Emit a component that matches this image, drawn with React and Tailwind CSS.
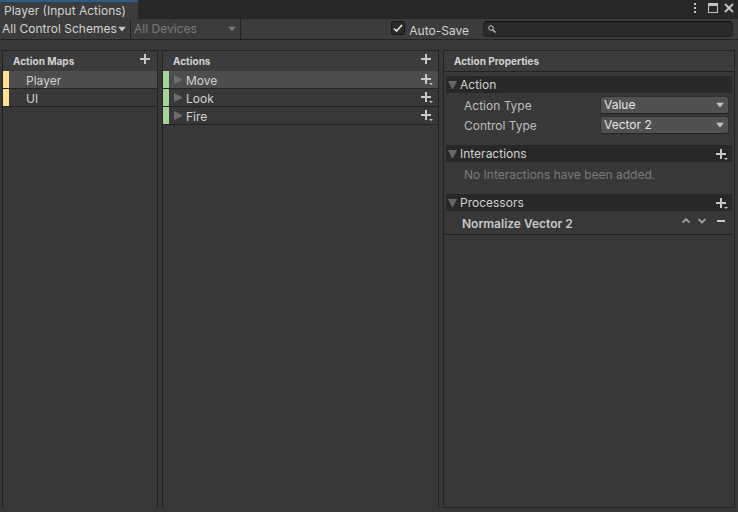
import React from "react";

const actionMaps = ["Player", "UI"];
const actions = ["Move", "Look", "Fire"];

function PlusIcon() {
  return (
    <svg width="14" height="14" viewBox="0 0 14 14" className="block" aria-hidden="true">
      <path d="M6 2h2v4h4v2H8v4H6V8H2V6h4z" fill="#c8c8c8" />
    </svg>
  );
}

function PlusMenuIcon() {
  return (
    <svg width="14" height="14" viewBox="0 0 14 14" className="block" aria-hidden="true">
      <path d="M5 1h2v4h4v2H7v4H5V7H1V5h4z" fill="#c8c8c8" />
      <path d="M9 10h4l-2 2z" fill="#c8c8c8" />
    </svg>
  );
}

function Caret({ className }) {
  return (
    <svg
      width="8"
      height="5"
      viewBox="0 0 8 5"
      aria-hidden="true"
      className={`pointer-events-none absolute top-1/2 -translate-y-1/2 ${className}`}
    >
      <path d="M0 0h8L4.500 4.500h-1z" fill="currentColor" />
    </svg>
  );
}

function ToolbarSelect({ label, width, disabled }) {
  return (
    <div className={`relative h-full border-r border-[#232323] ${width}`}>
      <select
        aria-label={label}
        disabled={disabled}
        className={`block h-full w-full appearance-none bg-transparent text-[12px] leading-5 outline-none ${
          disabled ? "pl-[3px] text-[#7a7a7a] opacity-100" : "pl-[2px] text-[#d2d2d2]"
        }`}
      >
        <option>{label}</option>
      </select>
      <Caret className={disabled ? "right-1 text-[#7a7a7a]" : "right-1 text-[#c4c4c4]"} />
    </div>
  );
}

function PanelHeader({ title, add, className = "" }) {
  return (
    <div className={`flex h-5 items-center justify-between bg-[#3c3c3c] pr-[5px] pl-[10px] ${className}`}>
      <h2 className="text-[10px] leading-5 font-bold text-[#d2d2d2]">{title}</h2>
      {add && (
        <button type="button" aria-label={add} className="mb-1">
          <PlusIcon />
        </button>
      )}
    </div>
  );
}

function Section({ title, add, children }) {
  return (
    <section>
      <div className="mx-[2px] flex h-[17px] items-center justify-between bg-[#282828] pr-[3px] text-[#d2d2d2]">
        <button type="button" aria-expanded="true" className="flex items-center gap-[3px] pl-[2px] leading-[17px]">
          <svg width="9" height="8" viewBox="0 0 9 8" aria-hidden="true">
            <path d="M0 0h9L5 8H4z" fill="#666666" />
          </svg>
          {title}
        </button>
        {add && (
          <button type="button" aria-label={add} className="pt-[2px]">
            <PlusMenuIcon />
          </button>
        )}
      </div>
      {children}
    </section>
  );
}

function PropertySelect({ id, label, value }) {
  return (
    <div className="flex h-5 items-center pr-[5px] pl-5">
      <label htmlFor={id} className="flex-1 pt-[2px] text-[#bdbdbd]">
        {label}
      </label>
      <div className="relative w-[129px]">
        <select
          id={id}
          className="block h-[18px] w-full appearance-none rounded-[3px] border border-[#303030] border-b-[#242424] bg-[#515151] pl-[3px] text-[12px] leading-4 text-[#e4e4e4] outline-none"
        >
          <option>{value}</option>
        </select>
        <Caret className="right-[5px] text-[#c4c4c4]" />
      </div>
    </div>
  );
}

export default function App() {
  return (
    <div className="flex min-h-screen flex-col bg-[#383838] font-['Inter','Liberation_Sans',sans-serif] text-[12px] leading-4 text-[#d2d2d2]">
      <header className="flex h-[19px] items-stretch justify-between bg-[#282828]">
        <h1 className="w-[138px] border-t-2 border-[#2c5d87] bg-[#3c3c3c] pl-1 leading-[18px]">
          Player (Input Actions)
        </h1>
        <div className="flex flex-1 items-center justify-end gap-[6px] border-b border-[#232323] pr-1 pb-[2px]">
          <button type="button" aria-label="Window menu">
            <svg width="4" height="12" viewBox="0 0 4 12" className="block" fill="#c4c4c4" aria-hidden="true">
              <path d="M1 1h2v2H1zM1 5h2v2H1zM1 9h2v2H1z" />
            </svg>
          </button>
          <button type="button" aria-label="Maximize" className="ml-[5px]">
            <svg width="10" height="10" viewBox="0 0 10 10" className="block" fill="#c4c4c4" aria-hidden="true">
              <path fillRule="evenodd" d="M0 0h10v10H0zM1 3v6h8V3z" />
            </svg>
          </button>
          <button type="button" aria-label="Close">
            <svg width="10" height="10" viewBox="0 0 10 10" className="block" aria-hidden="true">
              <path d="M1 1l8 8M9 1L1 9" stroke="#c4c4c4" strokeWidth="1.8" />
            </svg>
          </button>
        </div>
      </header>

      <div className="flex h-[21px] items-stretch border-b border-[#232323] bg-[#3c3c3c]">
        <ToolbarSelect label="All Control Schemes" width="w-[131px]" />
        <ToolbarSelect label="All Devices" width="w-[110px]" disabled />
        <label className="ml-auto flex items-center gap-1 pr-[14px]">
          <span className="relative mb-[2px] block size-[14px]">
            <input
              type="checkbox"
              defaultChecked
              className="peer block size-[14px] appearance-none rounded-[2px] border border-[#1a1a1a] bg-[#2a2a2a]"
            />
            <svg
              width="14"
              height="14"
              viewBox="0 0 14 14"
              aria-hidden="true"
              className="pointer-events-none absolute inset-0 hidden peer-checked:block"
            >
              <path d="M3 7.500l2.500 2.500L11 4" fill="none" stroke="#e4e4e4" strokeWidth="1.7" />
            </svg>
          </span>
          <span className="pt-[3px]">Auto-Save</span>
        </label>
        <div className="mt-[2px] mr-[5px] flex h-4 w-[250px] items-center rounded-[4px] border border-[#212121] border-t-[#111111] bg-[#2a2a2a] pl-1">
          <svg width="8" height="8" viewBox="0 0 8 8" fill="none" stroke="#c4c4c4" aria-hidden="true">
            <circle cx="3" cy="3" r="2.300" strokeWidth="1" />
            <path d="M4.700 4.700L7.500 7.500" strokeWidth="1.300" />
          </svg>
          <input
            type="search"
            aria-label="Search actions"
            className="ml-1 h-full min-w-0 flex-1 bg-transparent text-[12px] outline-none"
          />
        </div>
      </div>

      <main className="grid flex-1 grid-cols-[156fr_277fr_292fr] gap-1 pt-[10px] pr-[3px] pb-1 pl-[2px]">
        <section className="border-x border-t border-[#232323]">
          <PanelHeader title="Action Maps" add="Add action map" />
          <ul>
            {actionMaps.map((name, i) => (
              <li key={name} className="border-b border-[#232323]">
                <button
                  type="button"
                  className={`flex h-[17px] w-full items-center border-l-6 border-[#ffe394] pl-[17px] leading-[18px] ${
                    i === 0 ? "bg-[#4d4d4d]" : ""
                  }`}
                >
                  <span className="pt-[2px]">{name}</span>
                </button>
              </li>
            ))}
          </ul>
        </section>

        <section className="border-x border-t border-[#232323]">
          <PanelHeader title="Actions" add="Add action" />
          <ul>
            {actions.map((name, i) => (
              <li key={name} className="border-b border-[#232323]">
                <div
                  className={`flex h-[17px] items-center border-l-6 border-[#a8d29b] pr-[4px] pl-[5px] ${
                    i === 0 ? "bg-[#4d4d4d]" : ""
                  }`}
                >
                  <button type="button" className="flex flex-1 items-center gap-1 leading-[18px]">
                    <svg width="8" height="9" viewBox="0 0 8 9" aria-hidden="true">
                      <path d="M0 0l8 4v1L0 9z" fill="#6c6c6c" />
                    </svg>
                    <span className="pt-[2px]">{name}</span>
                  </button>
                  <button type="button" aria-label={`Add binding to ${name}`}>
                    <PlusMenuIcon />
                  </button>
                </div>
              </li>
            ))}
          </ul>
        </section>

        <section className="border border-[#232323]">
          <PanelHeader title="Action Properties" className="box-content border-b border-[#232323]" />
          <div className="pt-1">
            <Section title="Action">
              <div className="pt-[2px] pb-[10px]">
                <PropertySelect id="action-type" label="Action Type" value="Value" />
                <PropertySelect id="control-type" label="Control Type" value="Vector 2" />
              </div>
            </Section>
            <Section title="Interactions" add="Add interaction">
              <p className="pt-[5px] pb-[11px] pl-5 text-[#7a7a7a]">No Interactions have been added.</p>
            </Section>
            <Section title="Processors" add="Add processor">
              <div className="mr-[1px] flex h-6 items-center border-b border-[#232323] pr-2 pl-[18px]">
                <h3 className="flex-1 pt-[2px] font-semibold text-[#c8c8c8]">Normalize Vector 2</h3>
                <div className="flex items-center gap-2 pb-1">
                  <button type="button" aria-label="Move up">
                    <svg width="8" height="6" viewBox="0 0 8 6" className="block" aria-hidden="true">
                      <path d="M.5 4.500L4 1l3.500 3.500" fill="none" stroke="#a0a0a0" strokeWidth="1.800" />
                    </svg>
                  </button>
                  <button type="button" aria-label="Move down">
                    <svg width="8" height="6" viewBox="0 0 8 6" className="block" aria-hidden="true">
                      <path d="M.5 1L4 4.500 7.500 1" fill="none" stroke="#a0a0a0" strokeWidth="1.800" />
                    </svg>
                  </button>
                  <button type="button" aria-label="Remove processor" className="ml-[3px]">
                    <svg width="8" height="2" viewBox="0 0 8 2" className="block" aria-hidden="true">
                      <path d="M0 0h8v2H0z" fill="#c8c8c8" />
                    </svg>
                  </button>
                </div>
              </div>
            </Section>
          </div>
        </section>
      </main>
    </div>
  );
}
